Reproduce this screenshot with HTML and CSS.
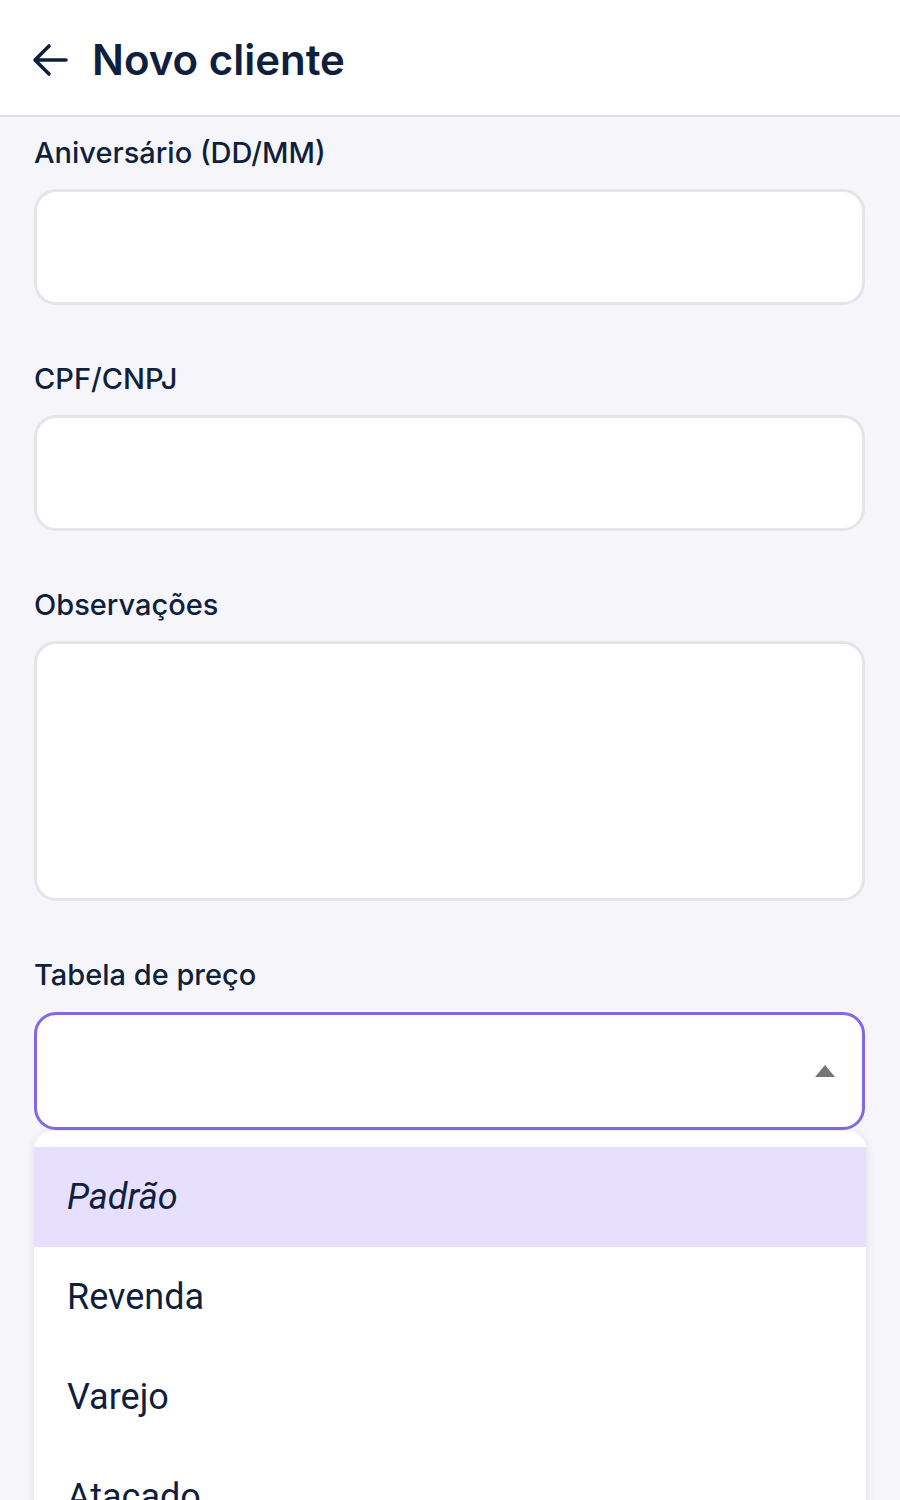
FILE: index.html
```html
<!DOCTYPE html>
<html lang="pt-BR">
<head>
<meta charset="utf-8">
<title>Novo cliente</title>
<link rel="stylesheet" href="styles.css">
</head>
<body>
<header class="topbar">
  <svg class="back" width="36" height="34" viewBox="0 0 36 34" aria-hidden="true">
    <path d="M34 17H4M17 3L3 17l14 14" fill="none" stroke="#0f1f3d" stroke-width="3.6" stroke-linecap="round" stroke-linejoin="round"/>
  </svg>
  <h1 class="title">Novo cliente</h1>
</header>
<main class="form">
  <div class="field">
    <label class="label">Aniversário (DD/MM)</label>
    <div class="input"></div>
  </div>
  <div class="field">
    <label class="label">CPF/CNPJ</label>
    <div class="input"></div>
  </div>
  <div class="field">
    <label class="label">Observações</label>
    <div class="input textarea"></div>
  </div>
  <div class="field field-select">
    <label class="label">Tabela de preço</label>
    <div class="select-wrap">
      <div class="input select">
        <span class="caret"></span>
      </div>
      <ul class="menu">
        <li class="item active">Padrão</li>
        <li class="item">Revenda</li>
        <li class="item">Varejo</li>
        <li class="item">Atacado</li>
      </ul>
    </div>
  </div>
</main>
</body>
</html>
```
FILE: styles.css
```css
* { box-sizing: border-box; }
html, body { margin: 0; padding: 0; }
body {
  background: #f5f5fa;
  font-family: Inter, "Noto Sans", sans-serif;
  color: #0f1f3d;
  height: 1500px;
  overflow: hidden;
}
.topbar {
  background: #ffffff;
  height: 117px;
  border-bottom: 2px solid #dcdce2;
  display: flex;
  align-items: center;
  padding-left: 32px;
  padding-top: 4px;
  gap: 24px;
}
.title {
  margin: 0;
  font-size: 42px;
  font-weight: 600;
  letter-spacing: 0;
  color: #0f1f3d;
}
.form {
  padding: 18px 35px 0 34px;
  display: flex;
  flex-direction: column;
  gap: 56px;
}
.field {
  display: flex;
  flex-direction: column;
  gap: 18px;
}
.field-select { gap: 19px; }
.label {
  font-size: 29px;
  line-height: 36px;
  font-weight: 500;
  color: #0f1f3d;
}
.input {
  height: 116px;
  background: #ffffff;
  border: 3px solid #e4e4ea;
  border-radius: 22px;
}
.textarea { height: 260px; }
.select-wrap { position: relative; }
.select {
  height: 118px;
  border: 3.5px solid #8466e8;
  position: relative;
}
.caret {
  position: absolute;
  right: 27px;
  top: 50px;
  width: 0;
  height: 0;
  border-left: 10px solid transparent;
  border-right: 10px solid transparent;
  border-bottom: 12px solid #757575;
}
.menu {
  position: absolute;
  left: 0;
  right: -1px;
  top: 119px;
  margin: 0;
  padding: 16px 0 0;
  list-style: none;
  background: #ffffff;
  border-radius: 18px 18px 0 0;
  box-shadow: 0 2px 10px rgba(20, 20, 60, 0.10);
  height: 400px;
  overflow: hidden;
}
.item {
  height: 100px;
  display: flex;
  align-items: center;
  padding-left: 33px;
  font-family: Roboto, "Liberation Sans", sans-serif;
  font-size: 36px;
  color: #0f1f3d;
}
.item.active {
  background: #e6e0fc;
  font-style: italic;
}
```
